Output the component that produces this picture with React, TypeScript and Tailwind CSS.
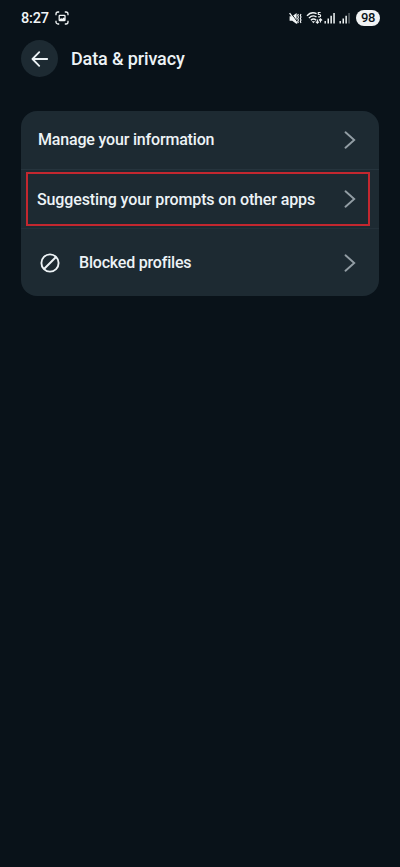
import React from "react";

const StatusBar = () => {
  return (
    <div className="flex h-9 items-center justify-between pr-[20px] pl-[21px] text-[#f1f5f6]">
      <div className="flex items-center gap-[6px]">
        <span className="pt-px text-[14.5px] leading-5 font-medium tracking-[-0.2px]">8:27</span>
        <svg width="14" height="14" viewBox="0 0 14 14" fill="none" stroke="currentColor" strokeWidth="1.3">
          <path d="M1 4.2V3a2 2 0 0 1 2-2h1.2M9.8 1H11a2 2 0 0 1 2 2v1.2M13 9.8V11a2 2 0 0 1-2 2H9.8M4.2 13H3a2 2 0 0 1-2-2V9.8" />
          <rect x="4.2" y="4.4" width="5.8" height="5.2" rx="0.6" />
          <path d="M4.4 9.4V8.2l1.8-1 1.2.6 1.2-1.4 1.4 1v2z" fill="currentColor" stroke="none" />
        </svg>
      </div>
      <div className="flex items-center">
        {/* Muted speaker with vibration */}
        <svg width="13" height="13" viewBox="0 0 13 13" fill="none" stroke="currentColor">
          <path d="M0.6 4.2h2.6L7.6 1v11L3.2 8.8H0.6z" fill="currentColor" stroke="none" />
          <path d="M1.6 0.7 9 10.6" stroke="#0a1219" strokeWidth="1" />
          <path d="M0.6 1.1 8.2 11.4" strokeWidth="1.3" />
          <path d="m9.4 2-.7 1.5.7 1.5-.7 1.5.7 1.5-.7 1.5.7 1.5M12 2l-.7 1.5.7 1.5-.7 1.5.7 1.5-.7 1.5.7 1.5" strokeWidth="1.1" />
        </svg>
        {/* Wi-Fi */}
        <svg className="ml-[4px]" width="17" height="14" viewBox="0 0 17 14" fill="none" stroke="currentColor" strokeWidth="1.4">
          <path d="M1 4.9C3.6 1.8 7.4 1.2 10.6 2.6M2.9 7.1c2.2-2.4 5.2-2.7 7.6-1.1M4.9 9.3c1.6-1.7 3.6-1.7 5.2 0" />
          <path d="M5.7 10.3h3.4L7.4 12.3z" fill="currentColor" stroke="none" />
          <path d="M14.6 1.5h-2.3v2h1.1c1.7 0 1.7 2.4 0 2.4h-1.2" strokeWidth="1.1" />
          <path d="M11.4 8.4v3.8M9.8 10.6l1.6 1.6 1.6-1.6M14.5 11.4V7.8M12.9 9.5l1.6-1.6 1.6 1.6" strokeWidth="1.1" />
        </svg>
        <svg className="ml-[1px]" width="12" height="12" viewBox="0 0 12 12" fill="currentColor">
          <path d="M0.5 9h1.4v2.5H0.5zM3.5 6.6h1.5v4.9H3.5zM6.4 3.8h1.5v7.7H6.4zM9.3 1h1.5v10.5H9.3z" />
        </svg>
        <svg className="ml-[3px]" width="12" height="12" viewBox="0 0 12 12" fill="currentColor">
          <path d="M0.5 9h1.4v2.5H0.5zM3.5 6.6h1.5v4.9H3.5zM6.4 3.8h1.5v7.7H6.4z" />
          <path d="M9.3 1h1.5v10.5H9.3z" opacity="0.35" />
        </svg>
        <span className="ml-[5px] flex h-4 w-6 items-center justify-center rounded-full bg-[#f1f3f4] text-[13px] font-medium tracking-[-0.4px] text-[#0b1319]">
          98
        </span>
      </div>
    </div>
  );
};

const Chevron = () => (
  <svg width="12" height="18" viewBox="0 0 12 18" fill="none" stroke="#929da4" strokeWidth="1.9" strokeLinecap="round">
    <path d="m1.5 1.3 8.7 7.7-8.7 7.7" />
  </svg>
);

const App = () => {
  return (
    <div className="min-h-[867px] w-full bg-[#091219] font-[Roboto,sans-serif] text-[#edf3f6]">
      <StatusBar />

      <header className="mt-1 flex items-center px-[21px]">
        <button className="flex size-[37px] items-center justify-center rounded-full bg-[#1d2a32]">
          <svg width="18" height="16" viewBox="0 0 18 16" fill="none" stroke="currentColor" strokeWidth="1.8" strokeLinecap="round" strokeLinejoin="round">
            <path d="M16.2 8H1.8M8.2 1.2 1.5 8l6.7 6.8" />
          </svg>
        </button>
        <h1 className="ml-[13px] text-[18px] leading-6 font-medium tracking-[-0.13px]">Data &amp; privacy</h1>
      </header>

      <main className="mx-[21px] mt-[34px] h-[185px] overflow-hidden rounded-[16px] bg-[#1d2a32] text-[16px] font-medium">
        <div className="flex h-[59px] items-center justify-between border-b border-[#26343d] pr-[23px] pl-[17px]">
          <span className="tracking-[-0.18px]">Manage your information</span>
          <Chevron />
        </div>

        {/* Highlighted row */}
        <div className="h-[59px] border-b border-[#23313a] pt-[2px] pr-[9px] pl-[5px]">
          <div className="flex h-[54px] items-center justify-between border-2 border-[#c3272f] pr-[12px] pl-[9px]">
            <span className="pt-[2px] tracking-[-0.12px]">Suggesting your prompts on other apps</span>
            <Chevron />
          </div>
        </div>

        <div className="flex h-[67px] items-center pr-[23px] pl-[19px]">
          <svg width="20" height="20" viewBox="0 0 20 20" fill="none" stroke="currentColor" strokeWidth="1.9">
            <circle cx="10" cy="10" r="8.6" />
            <path d="M4 16 16 4" />
          </svg>
          <span className="mr-auto ml-[19px] tracking-[-0.2px]">Blocked profiles</span>
          <Chevron />
        </div>
      </main>
    </div>
  );
};

export default App;
